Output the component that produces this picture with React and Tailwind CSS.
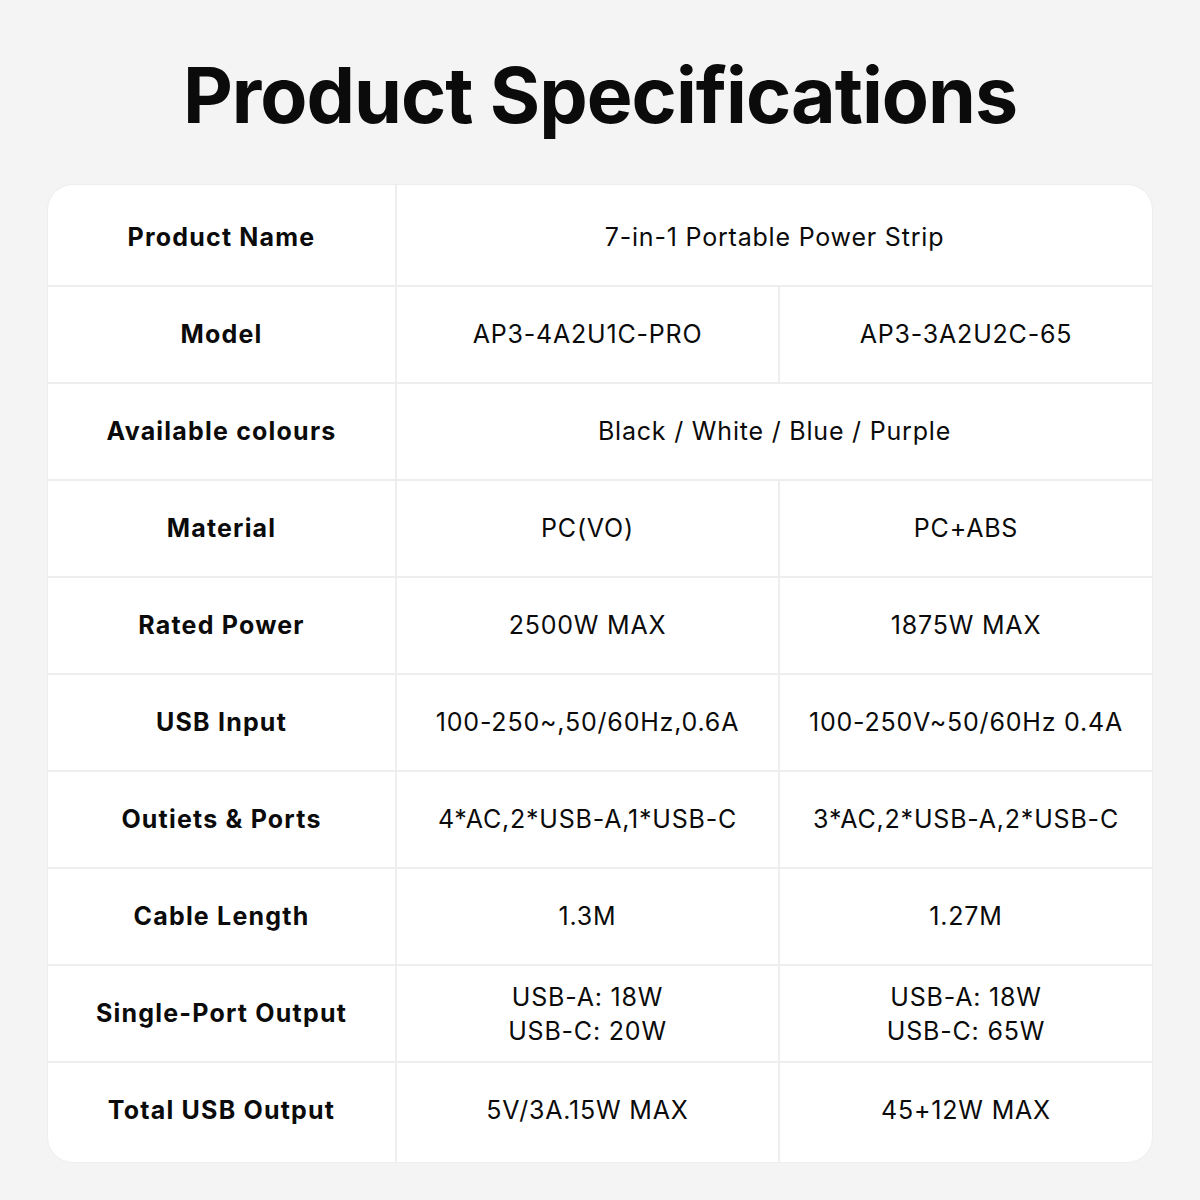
import React from "react";

const rows = [
  { label: "Product Name", span: "7-in-1 Portable Power Strip" },
  { label: "Model", a: "AP3-4A2U1C-PRO", b: "AP3-3A2U2C-65" },
  { label: "Available colours", span: "Black / White / Blue / Purple" },
  { label: "Material", a: "PC(VO)", b: "PC+ABS" },
  { label: "Rated Power", a: "2500W MAX", b: "1875W MAX" },
  { label: "USB Input", a: "100-250~,50/60Hz,0.6A", b: "100-250V~50/60Hz 0.4A" },
  { label: "Outiets & Ports", a: "4*AC,2*USB-A,1*USB-C", b: "3*AC,2*USB-A,2*USB-C" },
  { label: "Cable Length", a: "1.3M", b: "1.27M" },
  { label: "Single-Port Output", a: ["USB-A: 18W", "USB-C: 20W"], b: ["USB-A: 18W", "USB-C: 65W"] },
  { label: "Total USB Output", a: "5V/3A.15W MAX", b: "45+12W MAX" },
];

function Value({ v }) {
  if (Array.isArray(v)) {
    return (
      <div className="flex flex-col items-center leading-[34px]">
        {v.map((line) => (
          <span key={line}>{line}</span>
        ))}
      </div>
    );
  }
  return <span>{v}</span>;
}

export default function App() {
  return (
    <div
      className="w-[1200px] h-[1200px] bg-[#f4f4f4] flex flex-col items-center text-[#0b0b0b]"
      style={{ fontFamily: "Inter, 'Liberation Sans', sans-serif" }}
    >
      {/* Title */}
      <h1 className="mt-[46px] h-[100px] flex items-center text-[77px] font-bold tracking-[-1px]">
        Product Specifications
      </h1>

      {/* Spec table */}
      <div className="mt-[38px] w-[1106px] rounded-[26px] overflow-hidden bg-white border border-[#eeeeee]">
        <div className="grid grid-cols-[347px_381px_1fr] gap-[2px] bg-[#eeeeee]">
          {rows.map((r, i) => {
            // first and last rows run a few px taller to the card edge
            const h =
              i === 0
                ? "h-[100px] pt-[5px]"
                : i === rows.length - 1
                ? "h-[99px] pb-[4px]"
                : "h-[95px]";
            const cell = `${h} bg-white flex items-center justify-center text-[25px] tracking-[0.8px]`;
            return (
              <React.Fragment key={r.label}>
                <div className={`${h} bg-white flex items-center justify-center text-[25px] font-bold tracking-[1.2px]`}>
                  {r.label}
                </div>
                {r.span ? (
                  <div className={`${cell} col-span-2`}>{r.span}</div>
                ) : (
                  <>
                    <div className={cell}>
                      <Value v={r.a} />
                    </div>
                    <div className={cell}>
                      <Value v={r.b} />
                    </div>
                  </>
                )}
              </React.Fragment>
            );
          })}
        </div>
      </div>
    </div>
  );
}
